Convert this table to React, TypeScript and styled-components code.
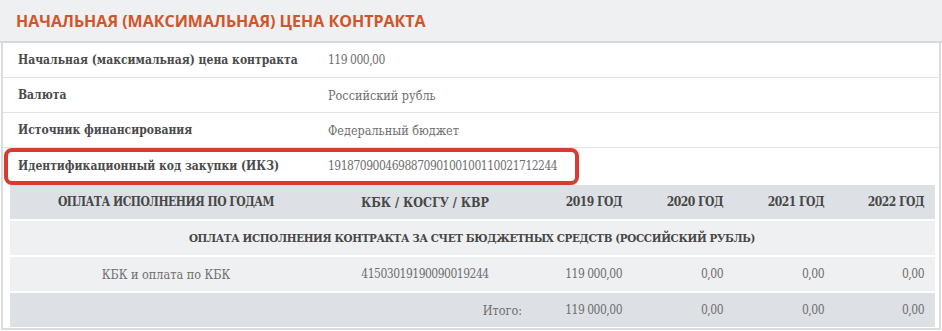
import React from "react";
import styled, { createGlobalStyle } from "styled-components";

const GlobalStyle = createGlobalStyle`
  body {
    margin: 0;
    background: #ffffff;
  }
`;

const slab = `"DejaVu Serif Condensed", "DejaVu Serif", serif`;

const info = [
  { label: "Начальная (максимальная) цена контракта", value: "119 000,00", numeric: true },
  { label: "Валюта", value: "Российский рубль" },
  { label: "Источник финансирования", value: "Федеральный бюджет" },
  { label: "Идентификационный код закупки (ИКЗ)", value: "191870900469887090100100110021712244", numeric: true, marked: true },
];

const years = ["2019 ГОД", "2020 ГОД", "2021 ГОД", "2022 ГОД"];

const App: React.FC = () => {
  return (
    <>
      <GlobalStyle />
      <Panel>
        <Header>
          <Title>Начальная (максимальная) цена контракта</Title>
        </Header>
        <Body>
          {info.map((row) => (
            <InfoRow key={row.label} $marked={row.marked}>
              <Label>{row.label}</Label>
              <Value $numeric={row.numeric}>{row.value}</Value>
            </InfoRow>
          ))}

          <Table>
            <Row $tone="dark">
              <HeadCell $align="center" $numeric>Оплата исполнения по годам</HeadCell>
              <HeadCell $align="center">КБК / КОСГУ / КВР</HeadCell>
              {years.map((y) => (
                <HeadCell key={y} $align="right" $numeric>{y}</HeadCell>
              ))}
            </Row>
            <Row $tone="light">
              <SpanCell>
                Оплата исполнения контракта за счет бюджетных средств (Российский рубль)
              </SpanCell>
            </Row>
            <Row $tone="light">
              <Cell $align="center">КБК и оплата по КБК</Cell>
              <Cell $align="center" $numeric>41503019190090019244</Cell>
              <Cell $align="right" $numeric>119 000,00</Cell>
              <Cell $align="right" $numeric>0,00</Cell>
              <Cell $align="right" $numeric>0,00</Cell>
              <Cell $align="right" $numeric>0,00</Cell>
            </Row>
            <Row $tone="dark">
              <Cell $align="center"></Cell>
              <Cell $align="right">Итого:</Cell>
              <Cell $align="right" $numeric>119 000,00</Cell>
              <Cell $align="right" $numeric>0,00</Cell>
              <Cell $align="right" $numeric>0,00</Cell>
              <Cell $align="right" $numeric>0,00</Cell>
            </Row>
          </Table>
        </Body>
      </Panel>
    </>
  );
};
export default App;

const Panel = styled.div`
  width: 942px;
  height: 331px;
  overflow: hidden;
`;

const Header = styled.div`
  height: 43px;
  box-sizing: border-box;
  background: #eef0f2;
  border-bottom: 2px solid #d6d9dc;
  display: flex;
  align-items: center;
  padding-left: 16px;
`;

const Title = styled.h2`
  margin: 0;
  font-family: "Open Sans", "Noto Sans", sans-serif;
  font-weight: 700;
  font-size: 16px;
  text-transform: uppercase;
  color: #d2552a;
`;

const Body = styled.div`
  margin: 0 1px;
  border: 2px solid #dcdcdc;
  border-top: none;
  padding-bottom: 1px;
`;

const InfoRow = styled.div<{ $marked?: boolean }>`
  position: relative;
  display: grid;
  grid-template-columns: 310px 1fr;
  align-items: center;
  height: 35px;
  box-sizing: border-box;
  padding-left: 15px;
  border-bottom: ${(p) => (p.$marked ? "none" : "1px solid #e2e3e4")};

  &::after {
    content: "";
    display: ${(p) => (p.$marked ? "block" : "none")};
    position: absolute;
    left: 1px;
    top: 0;
    width: 575px;
    height: 37px;
    box-sizing: border-box;
    border: 4px solid #d83b34;
    border-radius: 8px;
    pointer-events: none;
  }
`;

const Label = styled.div`
  font-family: ${slab};
  font-stretch: condensed;
  font-weight: 700;
  font-size: 12px;
  color: #4a4a4a;
`;

const Value = styled.div<{ $numeric?: boolean }>`
  font-family: ${slab};
  font-stretch: condensed;
  font-size: ${(p) => (p.$numeric ? "12px" : "12.5px")};
  letter-spacing: ${(p) => (p.$numeric ? "-0.5px" : "0")};
  color: #6e6e6e;
`;

const Table = styled.div`
  margin: 2px 4px 0 7px;
  display: flex;
  flex-direction: column;
  gap: 2px;
`;

const Row = styled.div<{ $tone: "dark" | "light" }>`
  display: grid;
  grid-template-columns: 312px 206px 100px 101px 101px 104px;
  height: 34px;
  align-items: center;
  background: ${(p) => (p.$tone === "dark" ? "#dde1e5" : "#eff0f2")};
`;

const Cell = styled.div<{ $align: "center" | "right"; $numeric?: boolean }>`
  font-family: ${slab};
  font-stretch: condensed;
  font-size: ${(p) => (p.$numeric ? "12px" : "12.5px")};
  letter-spacing: ${(p) => (p.$numeric ? "-0.5px" : "0")};
  color: #6e6e6e;
  text-align: ${(p) => p.$align};
  padding-right: ${(p) => (p.$align === "right" ? "6px" : "0")};
  &:last-child {
    padding-right: ${(p) => (p.$align === "right" ? "10px" : "0")};
  }
`;

const HeadCell = styled(Cell)`
  font-weight: 700;
  color: #474747;
  text-transform: uppercase;
`;

const SpanCell = styled.div`
  grid-column: 1 / -1;
  text-align: center;
  font-family: ${slab};
  font-stretch: condensed;
  font-weight: 700;
  font-size: 11.5px;
  letter-spacing: -0.35px;
  color: #474747;
  text-transform: uppercase;
`;
